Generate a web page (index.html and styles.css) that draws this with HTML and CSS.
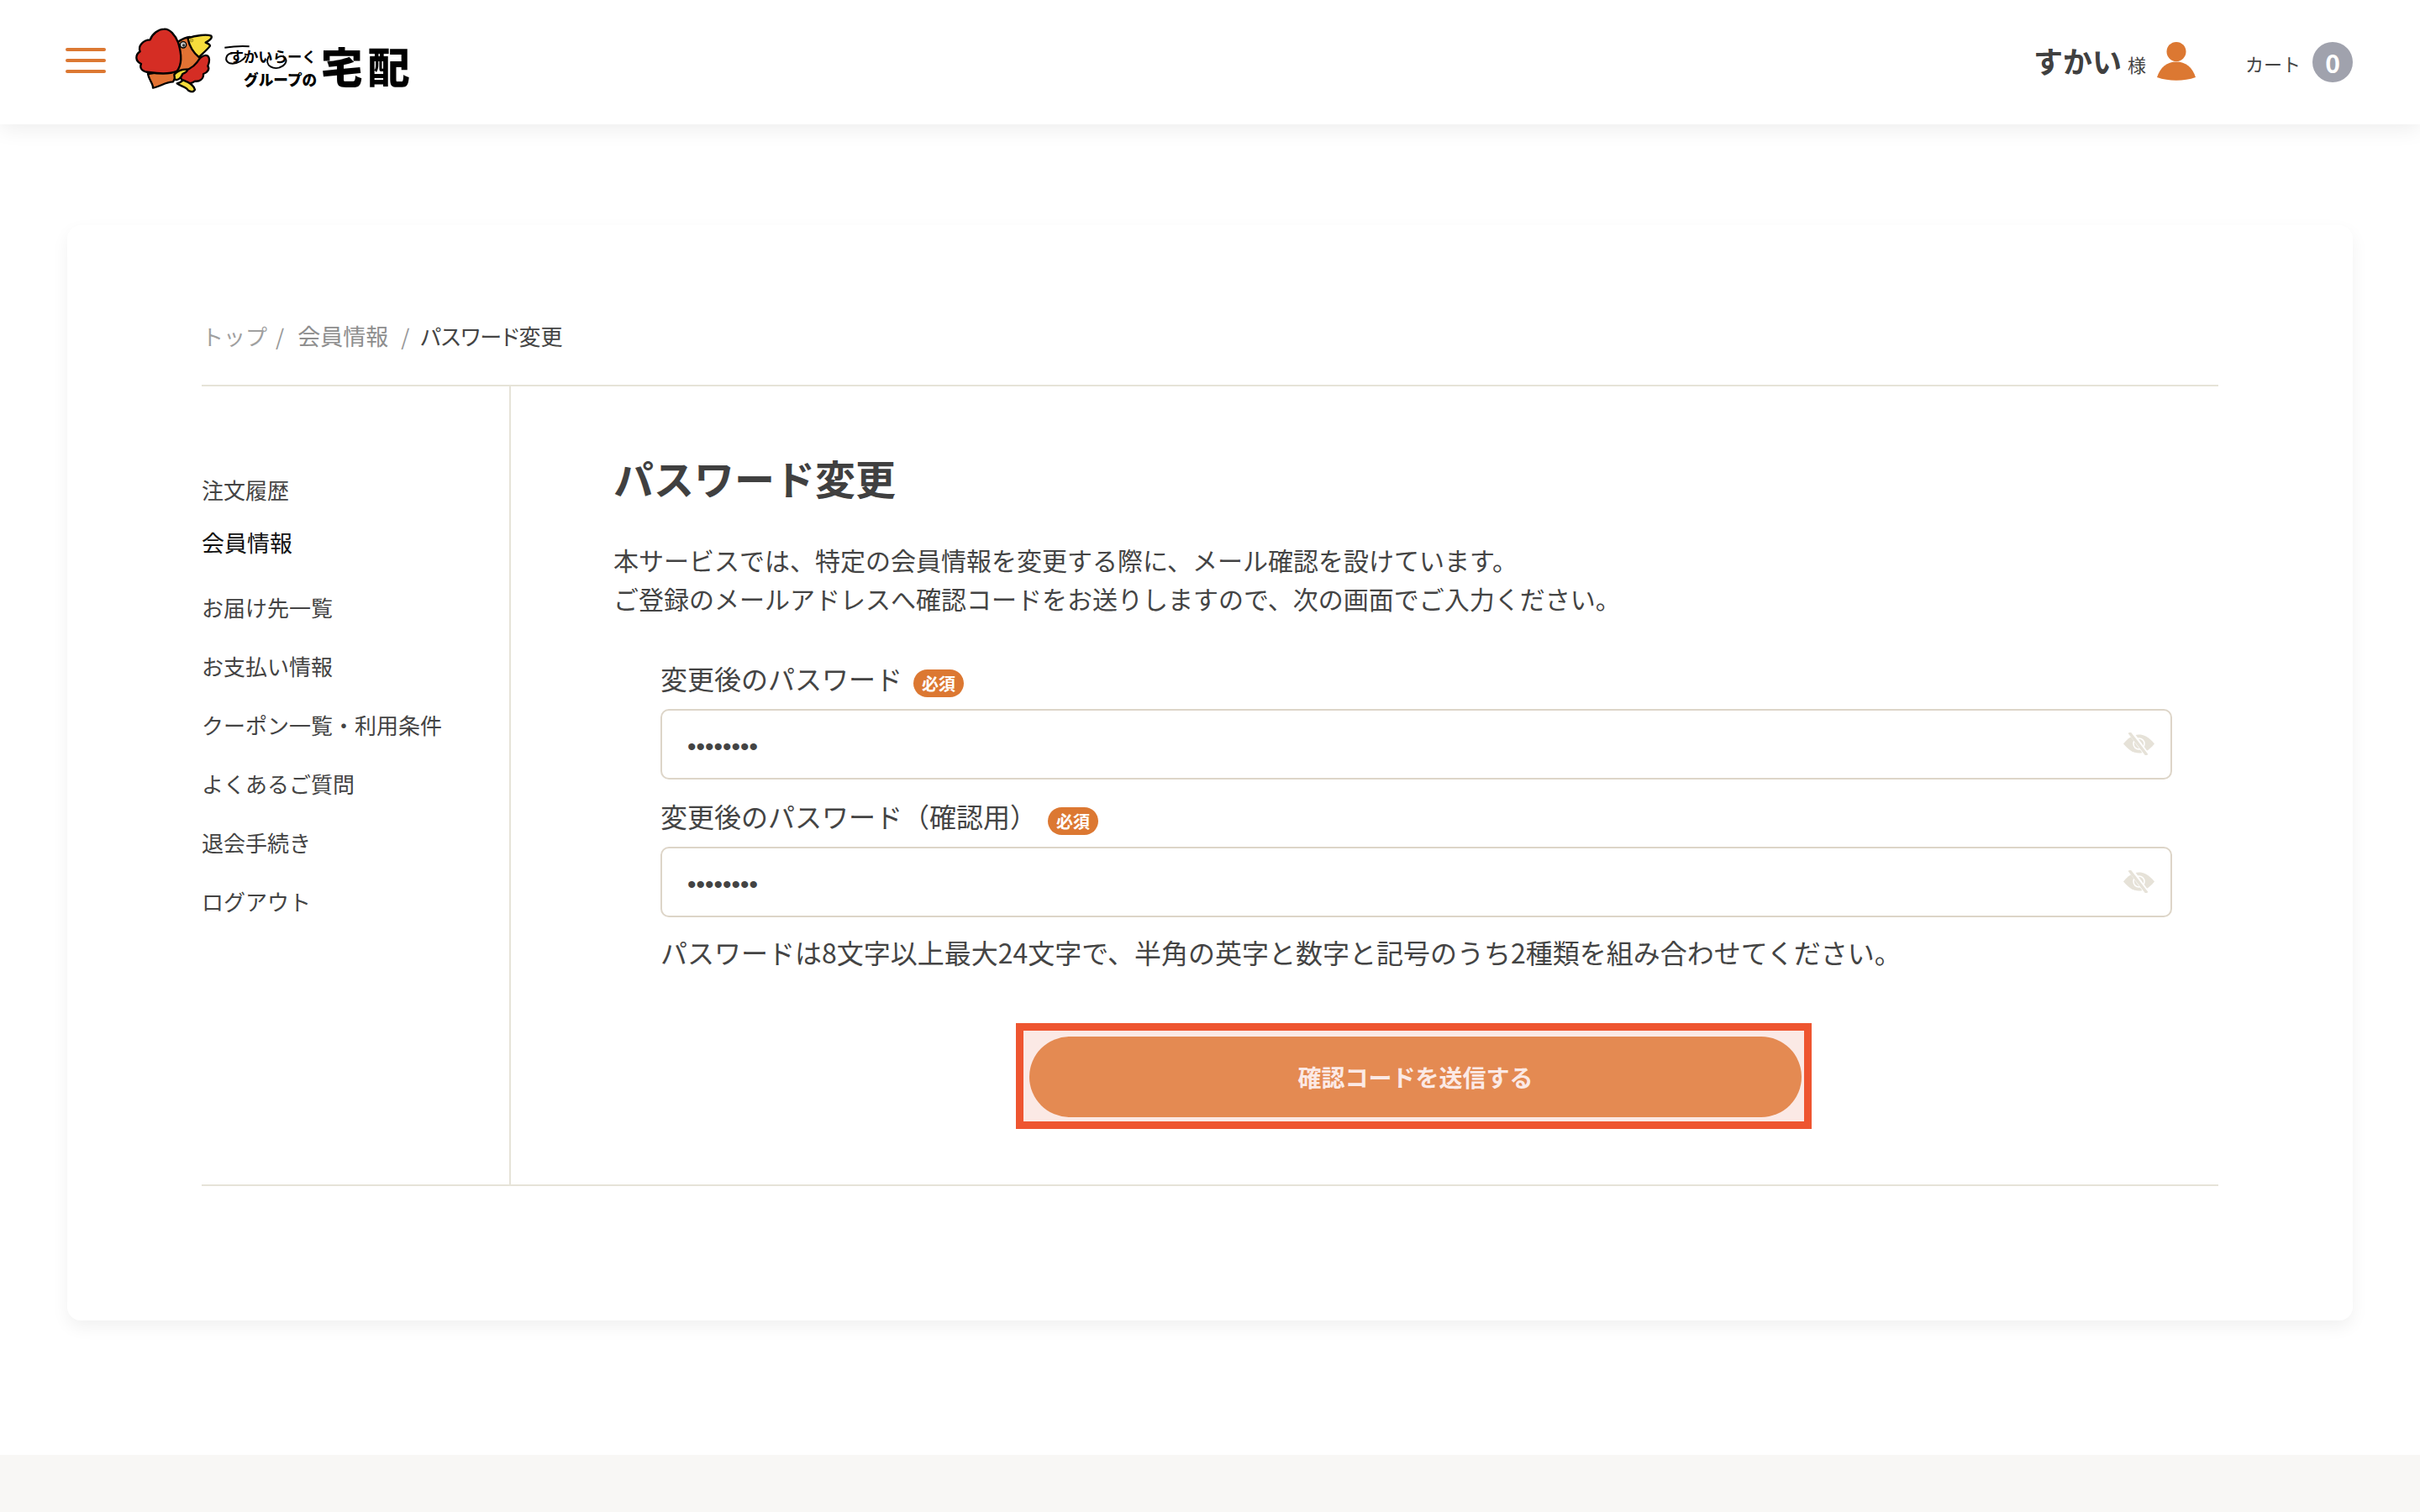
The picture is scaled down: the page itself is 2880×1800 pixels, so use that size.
FILE: index.html
```html
<!DOCTYPE html>
<html lang="ja">
<head>
<meta charset="utf-8">
<title>パスワード変更</title>
<link rel="stylesheet" href="styles.css">
</head>
<body>
<header class="header">
  <div class="header-left">
    <button class="burger" aria-label="メニュー"><span></span><span></span><span></span></button>
    <svg class="logo" viewBox="0 0 1080 330" width="360" height="110" role="img" aria-label="すかいらーくグループの宅配">
      <path class="b-red" d="M268 176 C290 150 308 130 322 140 C332 150 326 166 322 176 C330 186 320 200 306 204 C308 222 292 232 276 230 C264 240 246 238 236 234 L205 190Z"/>
      <path class="b-org" d="M212 92 C232 78 246 72 258 72 C262 100 276 126 296 144 C280 172 262 186 240 192 C214 200 204 216 198 232 C172 232 150 250 126 254 C128 240 112 226 108 204 C150 200 200 190 212 92Z"/>
      <path class="b-red" d="M166 44 C186 42 206 66 216 92 C228 130 230 170 212 194 C190 204 150 204 112 198 C92 198 76 186 84 168 C62 158 62 136 80 124 C72 104 92 82 116 82 C124 60 146 44 166 44Z"/>
      <path class="b-yel" d="M250 76 C280 66 318 62 334 68 C340 76 326 86 314 92 C322 96 330 98 330 104 C318 120 302 132 290 144 C270 128 256 104 250 76Z"/>
      <circle class="b-eye" cx="234" cy="100" r="11"/>
      <circle class="b-pupil" cx="236" cy="102" r="5"/>
      <circle class="b-dot" cx="264" cy="84" r="6"/>
      <path class="b-yel" d="M202 206 C212 194 232 186 248 188 C252 194 240 200 232 204 C226 220 214 228 204 224Z"/>
      <path class="b-yel" d="M212 238 C226 234 232 228 234 226 C250 232 272 244 276 260 C270 272 254 268 246 256 C236 248 222 246 212 238Z"/>
      <path class="l-swash" d="M382 110 C410 106 440 104 470 106 M410 130 C385 132 380 158 400 166 C430 172 452 150 458 140 M540 140 C520 175 560 195 590 175 C610 160 600 145 590 140"/>
      <text class="l-sm" x="398" y="163">すかいらーく</text>
      <text class="l-md" x="450" y="247">グループの</text>
      <text class="l-lg" x="725" y="238">宅配</text>
    </svg>
  </div>
  <div class="header-right">
    <div class="user"><span class="user-name">すかい</span><span class="user-sama">様</span>
      <svg class="user-icon" viewBox="0 0 46 47" width="46" height="47"><circle cx="23" cy="11.5" r="11.5"/><path d="M0 42 C4 30 12 23.500 23 23.500 C34 23.500 42 30 46 42 C32 47 14 47 0 42Z"/></svg>
    </div>
    <div class="cart"><span class="cart-label">カート</span><span class="cart-count">0</span></div>
  </div>
</header>

<main class="main">
  <section class="card">
    <nav class="crumbs">
      <a class="crumb crumb-top">トップ</a><span class="sep sep-a">/</span><a class="crumb crumb-mid">会員情報</a><span class="sep sep-b">/</span><span class="crumb-now">パスワード変更</span>
    </nav>
    <div class="columns">
      <aside class="side">
        <a class="side-item">注文履歴</a>
        <a class="side-item side-active">会員情報</a>
        <a class="side-item">お届け先一覧</a>
        <a class="side-item">お支払い情報</a>
        <a class="side-item">クーポン一覧・利用条件</a>
        <a class="side-item">よくあるご質問</a>
        <a class="side-item">退会手続き</a>
        <a class="side-item">ログアウト</a>
      </aside>
      <div class="content">
        <h1 class="title">パスワード変更</h1>
        <p class="lead">本サービスでは、特定の会員情報を変更する際に、メール確認を設けています。<br>ご登録のメールアドレスへ確認コードをお送りしますので、次の画面でご入力ください。</p>
        <form class="form">
          <div class="label"><span>変更後のパスワード</span><em class="req">必須</em></div>
          <div class="field">
            <input class="input" type="password" value="12345678" readonly>
            <svg class="eye" viewBox="0 0 37 27" width="37" height="27"><use href="#eye-off"/></svg>
          </div>
          <div class="label label-next"><span>変更後のパスワード（確認用）</span><em class="req">必須</em></div>
          <div class="field">
            <input class="input" type="password" value="12345678" readonly>
            <svg class="eye" viewBox="0 0 37 27" width="37" height="27"><use href="#eye-off"/></svg>
          </div>
          <p class="hint">パスワードは8文字以上最大24文字で、半角の英字と数字と記号のうち2種類を組み合わせてください。</p>
          <div class="highlight"><button type="button" class="submit">確認コードを送信する</button></div>
        </form>
      </div>
    </div>
  </section>
</main>
<footer class="footer"></footer>

<svg class="defs" width="0" height="0">
  <symbol id="eye-off" viewBox="0 0 37 27">
    <path fill="#e6e2d8" d="M0 13.500 C7 5 13 2.500 18.500 2.500 C24 2.500 30 5 37 13.500 C30 22 24 24.500 18.500 24.500 C13 24.500 7 22 0 13.500Z"/>
    <circle cx="18.500" cy="13.500" r="6.500" fill="none" stroke="#fff" stroke-width="1.500"/>
    <path d="M8 -1 L29 28" stroke="#fff" stroke-width="6"/>
    <path d="M7 0 L28 27" stroke="#e6e2d8" stroke-width="3.500"/>
  </symbol>
</svg>
</body>
</html>
```
FILE: styles.css
```css
* { box-sizing: border-box; }
html, body { margin: 0; padding: 0; }
body {
  width: 2880px;
  min-height: 1800px;
  background: #fff;
  color: #444;
  font-family: "Noto Sans CJK JP", "Noto Sans", sans-serif;
  display: flex;
  flex-direction: column;
}
.defs { position: absolute; }

.header {
  height: 148px;
  display: flex;
  align-items: center;
  justify-content: space-between;
  padding: 0 80px 0 78px;
  background: #fff;
  box-shadow: 0 6px 24px rgba(0, 0, 0, .07);
}
.header-left { display: flex; align-items: center; }
.burger {
  width: 48px;
  height: 30px;
  margin: -4px 0 0;
  padding: 0;
  border: 0;
  background: none;
  display: flex;
  flex-direction: column;
  justify-content: space-between;
}
.burger span { display: block; height: 4px; border-radius: 2px; background: #dc7832; }
.logo { margin: 0 0 0 14px; display: block; transform: translateY(1px); }
.logo > * { stroke: #000; stroke-linejoin: round; }
.b-red { fill: #d52d24; stroke-width: 7; }
.b-org { fill: #e27233; stroke-width: 7; }
.b-yel { fill: #f6dc3c; stroke-width: 7; }
.b-eye { fill: #c9c9c9; stroke-width: 4; }
.b-pupil { fill: #333; stroke: none; }
.logo .b-dot { fill: #c9b52e; stroke: #9c8a1c; stroke-width: 2; }
.logo .l-swash { fill: none; stroke-width: 6; }
.logo text { stroke: none; fill: #000; font-family: "Noto Sans CJK JP", sans-serif; }
.logo .l-sm { font-size: 52px; font-weight: 700; }
.logo .l-md { font-size: 53px; font-weight: 900; }
.logo .l-lg { font-size: 150px; font-weight: 900; letter-spacing: 18px; }

.header-right { display: flex; align-items: center; }
.user { display: flex; align-items: center; }
.user-name { font-size: 35px; font-weight: 700; line-height: 48px; color: #404040; margin-top: -4px; }
.user-sama { font-size: 22px; line-height: 30px; margin: 4px 0 0 7px; }
.user-icon { fill: #dc7832; margin: -1px 0 0 13px; display: block; }
.cart { display: flex; align-items: center; margin-left: 59px; }
.cart-label { font-size: 22px; line-height: 30px; margin-top: 2px; }
.cart-count {
  width: 48px; height: 48px; margin-left: 14px;
  border-radius: 50%;
  background: #a0a2ad;
  color: #fff;
  font-size: 30px;
  font-weight: 700;
  display: flex; align-items: center; justify-content: center;
}

.main { padding: 120px 80px 160px; }
.card {
  height: 1304px;
  padding: 112px 160px 0;
  border-radius: 16px;
  background: #fff;
  box-shadow: 0 8px 20px rgba(0, 0, 0, .06);
}
.crumbs {
  height: 80px;
  border-bottom: 2px solid #e6e3d8;
  font-size: 26px;
  line-height: 40px;
  display: flex;
  align-items: flex-start;
}
.crumb { color: #8e8e8e; }
.crumb-top { color: #a0a0a0; }
.crumb-mid { font-size: 27px; }
.sep { color: #999; }
.sep-a { margin: 0 16px 0 10px; }
.sep-b { margin: 0 13px 0 15px; }
.crumb-now { color: #444; font-feature-settings: "palt"; }

.columns { display: flex; height: 952px; border-bottom: 2px solid #e6e3d8; }
.side {
  width: 368px;
  padding-top: 103px;
  border-right: 2px solid #e6e3d8;
  display: flex;
  flex-direction: column;
  align-items: flex-start;
}
.side-item { font-size: 26px; line-height: 40px; margin-bottom: 30px; color: #444; }
.side-active { color: #111; font-size: 27px; margin: -7px 0 37px; }

.content { flex: 1; padding: 74px 55px 0 122px; }
.title { margin: 0; font-size: 48px; line-height: 68px; font-weight: 700; color: #404040; }
.lead { margin: 41px 0 0; font-size: 30px; line-height: 46px; }
.form { margin: 50px 0 0 56px; }
.label { display: flex; align-items: flex-start; font-size: 32px; line-height: 44px; }
.label-next { margin-top: 21px; }
.req {
  width: 60px; height: 33px; margin: 12px 0 0 13px;
  border-radius: 17px;
  background: #dc7832;
  color: #fff;
  font-style: normal;
  font-size: 20px;
  font-weight: 700;
  line-height: 33px;
  text-align: center;
}
.field { position: relative; margin-top: 14px; }
.input {
  display: block;
  width: 100%;
  height: 84px;
  padding: 6px 30px 0;
  border: 2px solid #ddd5c8;
  border-radius: 10px;
  background: #fff;
  color: #444;
  font-family: "Liberation Sans", sans-serif;
  font-size: 30px;
  outline: none;
}
.eye { position: absolute; right: 21px; top: 28px; }
.hint { margin: 18px 0 0; font-size: 32px; line-height: 46px; }
.highlight {
  width: 947px;
  height: 126px;
  margin: 62px 0 0 423px;
  padding: 7px;
  border: 9px solid #ee5530;
  background: #fbe9e5;
}
.submit {
  display: block;
  width: 919px;
  height: 96px;
  padding: 0;
  border: 0;
  border-radius: 48px;
  background: #e48a52;
  color: #fbe9e5;
  font-family: inherit;
  font-size: 28px;
  font-weight: 700;
}
.footer { height: 68px; background: #f8f7f5; }
```
